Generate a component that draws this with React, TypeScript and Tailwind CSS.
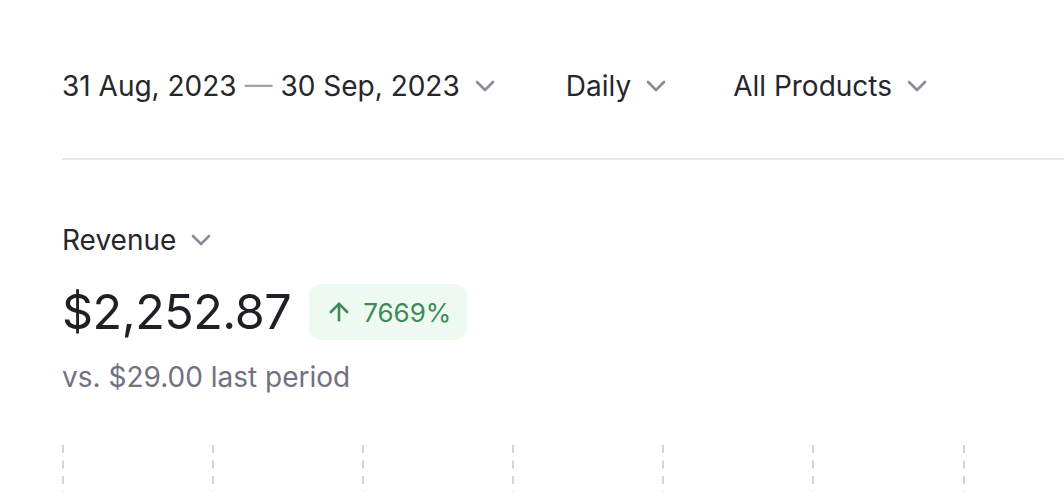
import { ChevronDown, ArrowUp } from "lucide-react";

function Chevron() {
  return <ChevronDown className="h-8 w-8 text-[#8b8b99]" strokeWidth={2} />;
}

function FilterButton({ children }: { children: React.ReactNode }) {
  return (
    <button className="flex items-center gap-[9px] text-[28px] leading-none text-[#26262c]">
      {children}
      <Chevron />
    </button>
  );
}

const gridXs = [1, 151, 301, 451, 601, 751, 902];

export default function App() {
  return (
    <div
      className="h-[492px] w-[1064px] overflow-hidden bg-white pl-[62px]"
      style={{ fontFamily: "Inter, 'Noto Sans', sans-serif" }}
    >
      <div className="flex h-[160px] items-center gap-[65px] border-b-2 border-[#e7e7ec] pt-[14px]">
        <FilterButton>
          <span>
            31 Aug, 2023 <span className="text-[#a3a3b0]">—</span> 30 Sep, 2023
          </span>
        </FilterButton>
        <FilterButton>Daily</FilterButton>
        <div className="-ml-1">
          <FilterButton>All Products</FilterButton>
        </div>
      </div>

      <div className="pt-[64px]">
        <button className="flex items-center gap-[9px] text-[28px] leading-none text-[#26262c]">
          Revenue
          <Chevron />
        </button>

        <div className="mt-[28px] flex items-center gap-[18px]">
          <span className="text-[48.5px] leading-none tracking-[-0.5px] text-[#1f1f25]">$2,252.87</span>
          <span className="flex h-[56px] items-center gap-[10px] rounded-xl bg-[#eefaf1] px-4 text-[26px] text-[#3f8a59]">
            <ArrowUp className="h-7 w-7" strokeWidth={2.25} />
            7669%
          </span>
        </div>

        <p className="mt-[23px] text-[28px] leading-none text-[#71717f]">vs. $29.00 last period</p>
      </div>

      <svg className="mt-[54px] block" width="1002" height="60">
        {gridXs.map((x) => (
          <line key={x} x1={x} x2={x} y1="0" y2="60" stroke="#d4d4d8" strokeWidth="2" strokeDasharray="8 7.5" />
        ))}
      </svg>
    </div>
  );
}
